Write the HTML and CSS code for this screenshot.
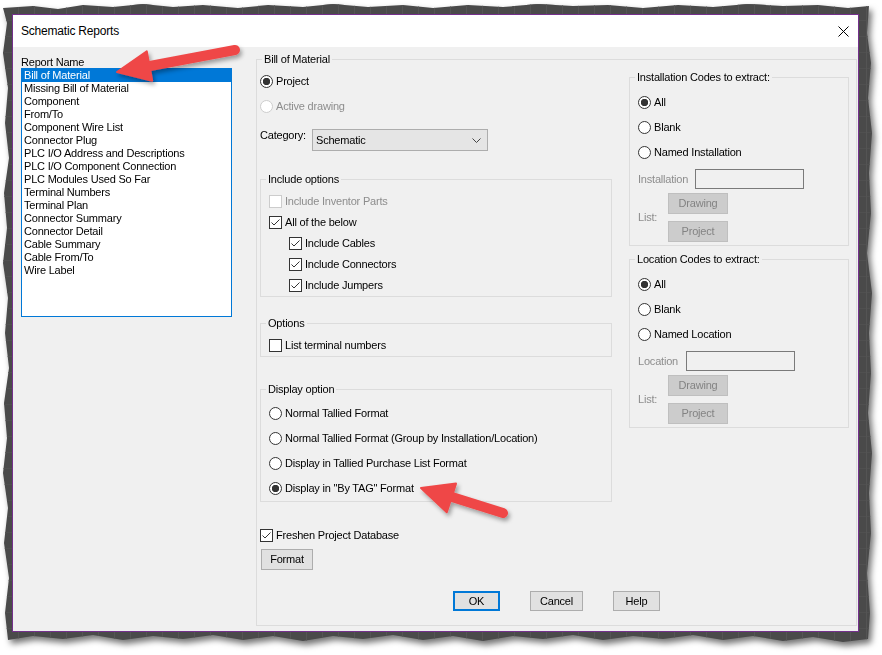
FILE: index.html
```html
<!DOCTYPE html>
<html>
<head>
<meta charset="utf-8">
<link rel="stylesheet" href="styles.css">
</head>
<body>
<div class="shot">
  <div class="frame-shadow">
    <div class="frame">
      <div class="dialog">
        <div class="titlebar">
          <span class="title">Schematic Reports</span>
          <svg class="close" width="11" height="11" viewBox="0 0 11 11"><path d="M0.5 0.5 L10.5 10.5 M10.5 0.5 L0.5 10.5" stroke="#000" stroke-width="1" fill="none"/></svg>
        </div>
        <div class="content">
          <div class="left">
            <div class="list-label">Report Name</div>
            <ul class="listbox">
              <li class="sel">Bill of Material</li>
              <li>Missing Bill of Material</li>
              <li>Component</li>
              <li>From/To</li>
              <li>Component Wire List</li>
              <li>Connector Plug</li>
              <li>PLC I/O Address and Descriptions</li>
              <li>PLC I/O Component Connection</li>
              <li>PLC Modules Used So Far</li>
              <li>Terminal Numbers</li>
              <li>Terminal Plan</li>
              <li>Connector Summary</li>
              <li>Connector Detail</li>
              <li>Cable Summary</li>
              <li>Cable From/To</li>
              <li>Wire Label</li>
            </ul>
          </div>
          <div class="group main">
            <div class="legend">Bill of Material</div>
            <div class="cols">
              <div class="mid">
                <div class="row r-project"><span class="radio on"></span>Project</div>
                <div class="row r-active disabled"><span class="radio"></span>Active drawing</div>
                <div class="cat-row">
                  <span class="cat-label">Category:</span>
                  <div class="combo"><span>Schematic</span><svg width="9" height="5" viewBox="0 0 9 5"><polyline points="0.5,0.5 4.5,4.5 8.5,0.5" fill="none" stroke="#444" stroke-width="1"/></svg></div>
                </div>
                <div class="group padded g-include">
                  <div class="legend">Include options</div>
                  <div class="row first disabled"><span class="cb"></span>Include Inventor Parts</div>
                  <div class="row next"><span class="cb on"></span>All of the below</div>
                  <div class="row next sub"><span class="cb on"></span>Include Cables</div>
                  <div class="row next sub"><span class="cb on"></span>Include Connectors</div>
                  <div class="row next sub"><span class="cb on"></span>Include Jumpers</div>
                </div>
                <div class="group padded g-options">
                  <div class="legend">Options</div>
                  <div class="row first"><span class="cb"></span>List terminal numbers</div>
                </div>
                <div class="group padded g-display">
                  <div class="legend">Display option</div>
                  <div class="row d-first"><span class="radio"></span>Normal Tallied Format</div>
                  <div class="row next2"><span class="radio"></span>Normal Tallied Format (Group by Installation/Location)</div>
                  <div class="row next2"><span class="radio"></span>Display in Tallied Purchase List Format</div>
                  <div class="row next2"><span class="radio on"></span>Display in "By TAG" Format</div>
                </div>
                <div class="row r-freshen"><span class="cb on"></span>Freshen Project Database</div>
                <button class="btn b-format">Format</button>
              </div>
              <div class="right">
                <div class="group padded g-codes g-inst">
                  <div class="legend">Installation Codes to extract:</div>
                  <div class="row rr"><span class="radio on"></span>All</div>
                  <div class="row rr"><span class="radio"></span>Blank</div>
                  <div class="row rr"><span class="radio"></span>Named Installation</div>
                  <div class="field-row"><span class="f-label w-inst">Installation</span><span class="textbox"></span></div>
                  <div class="list-row">
                    <span class="f-label w-list">List:</span>
                    <div class="btn-col"><span class="btn dis">Drawing</span><span class="btn dis">Project</span></div>
                  </div>
                </div>
                <div class="group padded g-codes g-loc">
                  <div class="legend">Location Codes to extract:</div>
                  <div class="row rr"><span class="radio on"></span>All</div>
                  <div class="row rr"><span class="radio"></span>Blank</div>
                  <div class="row rr"><span class="radio"></span>Named Location</div>
                  <div class="field-row"><span class="f-label w-loc">Location</span><span class="textbox"></span></div>
                  <div class="list-row">
                    <span class="f-label w-list">List:</span>
                    <div class="btn-col"><span class="btn dis">Drawing</span><span class="btn dis">Project</span></div>
                  </div>
                </div>
              </div>
            </div>
            <div class="footer">
              <button class="btn b-ok">OK</button>
              <button class="btn b-cancel">Cancel</button>
              <button class="btn b-help">Help</button>
            </div>
          </div>
        </div>
      </div>
    </div>
  </div>
  <svg class="arrows" width="882" height="655" viewBox="0 0 882 655">
    <defs>
      <filter id="sh" x="-20%" y="-40%" width="140%" height="180%">
        <feDropShadow dx="2" dy="3" stdDeviation="2" flood-color="#000" flood-opacity="0.35"/>
      </filter>
    </defs>
    <g filter="url(#sh)" fill="#ef4747" stroke="#ef4747">
      <line x1="235" y1="50" x2="150" y2="66" stroke-width="10" stroke-linecap="round"/>
      <polygon points="117,72 146.8,51.4 152.2,80.8" stroke-width="2" stroke-linejoin="round"/>
      <line x1="503" y1="513" x2="452" y2="497" stroke-width="10" stroke-linecap="round"/>
      <polygon points="421,488 456,483.6 446.8,512.2" stroke-width="2" stroke-linejoin="round"/>
    </g>
  </svg>
</div>
</body>
</html>
```

FILE: styles.css
```css
* { box-sizing: border-box; }

body {
  margin: 0;
  background: #ffffff;
  font-family: "Liberation Sans", Arial, sans-serif;
  font-size: 11px;
  letter-spacing: -0.2px;
  color: #000;
}

.shot {
  position: relative;
  width: 882px;
  height: 655px;
  overflow: hidden;
}

.frame-shadow {
  margin: 3px 0 0 3px;
  width: 869px;
  height: 641px;
  filter: drop-shadow(3px 4px 3px rgba(0, 0, 0, 0.55));
}

.frame {
  width: 869px;
  height: 641px;
  padding: 11px 0 0 9px;
  background-color: #4a4a4a;
  background-image:
    repeating-linear-gradient(90deg, transparent 0 15px, #545454 15px 16px),
    repeating-linear-gradient(0deg, transparent 0 15px, #505050 15px 16px);
  clip-path: polygon(
    0px 5px, 30px 3px, 55px 6px, 80px 2px, 110px 4px, 140px 1px, 170px 4px, 200px 2px, 235px 5px, 265px 2px,
    300px 4px, 330px 1px, 365px 4px, 400px 2px, 430px 5px, 465px 2px, 500px 4px, 535px 1px, 570px 3px, 605px 2px,
    640px 5px, 675px 2px, 710px 4px, 745px 1px, 780px 3px, 815px 2px, 845px 5px, 866px 3px,
    864px 30px, 868px 60px, 865px 95px, 869px 130px, 866px 170px, 868px 210px, 864px 250px, 869px 290px,
    866px 330px, 868px 370px, 865px 410px, 869px 450px, 866px 490px, 868px 530px, 864px 570px, 867px 610px, 865px 636px,
    840px 639px, 810px 634px, 780px 638px, 750px 633px, 720px 637px, 690px 632px, 660px 636px, 630px 633px,
    600px 637px, 570px 632px, 540px 636px, 510px 633px, 480px 638px, 450px 633px, 420px 637px, 390px 632px,
    360px 636px, 330px 633px, 300px 638px, 270px 633px, 240px 637px, 210px 632px, 180px 636px, 150px 633px,
    120px 637px, 90px 632px, 60px 636px, 30px 633px, 5px 637px,
    2px 610px, 6px 575px, 1px 540px, 5px 505px, 0px 470px, 4px 435px, 1px 400px, 6px 365px, 2px 330px,
    5px 295px, 0px 260px, 4px 225px, 1px 190px, 6px 155px, 2px 120px, 5px 85px, 0px 50px, 4px 20px
  );
}

.dialog {
  width: 847px;
  height: 618px;
  border: 1px solid #74308c;
  background: #f0f0f0;
}

.titlebar {
  height: 32px;
  background: #ffffff;
  display: flex;
  align-items: center;
  justify-content: space-between;
  padding: 0 9px 0 8px;
}

.title {
  font-size: 12px;
  letter-spacing: -0.2px;
}

.close { display: block; }

.content {
  display: flex;
  align-items: flex-start;
  padding-left: 8px;
}

.left {
  width: 211px;
  padding-top: 9px;
}

.list-label { line-height: 12px; }

.listbox {
  height: 249px;
  margin: 0;
  padding: 0;
  list-style: none;
  background: #ffffff;
  border: 1px solid #0078d7;
}

.listbox li {
  line-height: 13px;
  height: 13px;
  padding-left: 2px;
  white-space: nowrap;
}

.listbox li.sel {
  background: #0078d7;
  color: #ffffff;
}

/* group boxes */
.group {
  border: 1px solid #dcdcdc;
}

.legend {
  display: table;
  margin: -7px 0 0 5px;
  padding: 0 2px;
  line-height: 13px;
  background: #f0f0f0;
  white-space: nowrap;
}

.padded > .legend { margin-left: -3px; }

.main {
  margin: 12px 0 0 24px;
  width: 601px;
  height: 567px;
}

.cols {
  display: flex;
  align-items: flex-start;
  padding-left: 3px;
}

.mid { width: 352px; }

.right {
  width: 220px;
  margin-left: 17px;
}

/* rows and controls */
.row {
  display: flex;
  align-items: center;
  height: 13px;
  line-height: 13px;
  white-space: nowrap;
}

.disabled { color: #8d8d8d; }

.radio {
  flex: none;
  width: 13px;
  height: 13px;
  border-radius: 50%;
  border: 1px solid #333333;
  background: #ffffff;
  margin-right: 3px;
}

.radio.on {
  background: radial-gradient(circle at center, #333333 0 3.4px, #ffffff 4px);
}

.disabled .radio { border-color: #cccccc; }

.cb {
  flex: none;
  width: 13px;
  height: 13px;
  border: 1px solid #333333;
  background: #ffffff;
  margin-right: 3px;
}

.cb.on {
  background: #ffffff url("data:image/svg+xml,%3Csvg xmlns='http://www.w3.org/2000/svg' width='11' height='11'%3E%3Cpolyline points='1.5,5.5 4,8 9.5,2.5' fill='none' stroke='%23333' stroke-width='1'/%3E%3C/svg%3E") center / 11px 11px no-repeat;
}

.disabled .cb { border-color: #cccccc; }

.r-project { margin-top: 9px; }
.r-active { margin-top: 12px; }

.cat-row {
  display: flex;
  align-items: flex-start;
  margin-top: 16px;
  height: 22px;
}

.cat-label {
  width: 52px;
  line-height: 13px;
}

.combo {
  width: 176px;
  height: 22px;
  border: 1px solid #adadad;
  background: #e5e5e5;
  display: flex;
  align-items: center;
  justify-content: space-between;
  padding: 0 6px 0 3px;
}

.combo svg { display: block; margin-top: 1px; }

.g-include {
  margin-top: 28px;
  padding: 0 0 4px 8px;
}

.g-include .first { margin-top: 9px; }
.g-include .next { margin-top: 8px; }
.sub { margin-left: 20px; }

.g-options {
  margin-top: 26px;
  padding: 0 0 4px 8px;
}

.g-options .first { margin-top: 9px; }

.g-display {
  margin-top: 32px;
  padding: 0 0 6px 8px;
}

.d-first { margin-top: 11px; }
.next2 { margin-top: 12px; }

.r-freshen { margin-top: 27px; }

/* buttons */
.btn {
  display: flex;
  align-items: center;
  justify-content: center;
  font-family: inherit;
  font-size: 11px;
  letter-spacing: -0.2px;
  color: #000;
  background: #e1e1e1;
  border: 1px solid #adadad;
  padding: 0;
  margin: 0;
  line-height: 13px;
}

.b-format {
  margin: 7px 0 0 1px;
  width: 52px;
  height: 21px;
}

.footer {
  display: flex;
  margin-top: 21px;
  padding-left: 196px;
}

.footer .btn { height: 20px; }
.b-ok { width: 47px; border: 2px solid #0078d7; }
.b-cancel { width: 53px; margin-left: 30px; }
.b-help { width: 47px; margin-left: 30px; }

/* right side groups */
.g-codes {
  padding: 0 0 3px 8px;
}

.g-inst { margin-top: 11px; }
.g-loc { margin-top: 13px; }

.rr { margin-top: 12px; }

.field-row {
  display: flex;
  align-items: center;
  margin-top: 10px;
  height: 20px;
}

.f-label {
  color: #8d8d8d;
  line-height: 13px;
  white-space: nowrap;
}

.w-inst { width: 57px; }
.w-loc { width: 48px; }
.w-list { width: 30px; }

.textbox {
  width: 109px;
  height: 20px;
  border: 1px solid #7a7a7a;
}

.list-row {
  display: flex;
  align-items: center;
  margin-top: 4px;
}

.btn-col {
  display: flex;
  flex-direction: column;
  gap: 7px;
}

.btn.dis {
  width: 60px;
  height: 21px;
  background: #cccccc;
  border-color: #bfbfbf;
  color: #838383;
}

.arrows {
  position: absolute;
  left: 0;
  top: 0;
  pointer-events: none;
}
```
